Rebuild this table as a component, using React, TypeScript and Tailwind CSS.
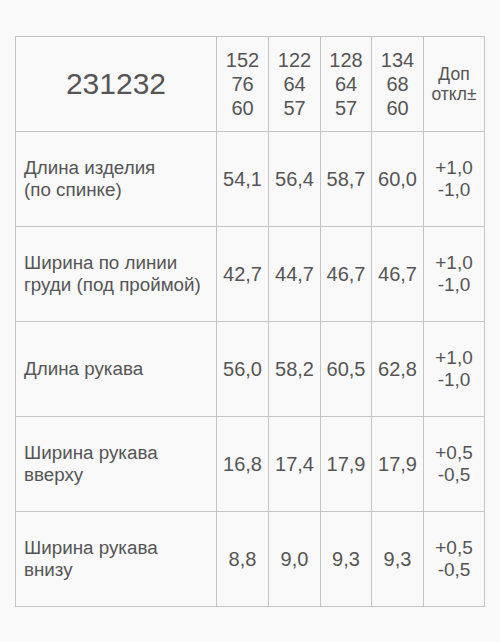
import React from "react";

const rows: { label: string[]; vals: string[]; tol: string[] }[] = [
  { label: ["Длина изделия", "(по спинке)"], vals: ["54,1", "56,4", "58,7", "60,0"], tol: ["+1,0", "-1,0"] },
  { label: ["Ширина по линии", "груди (под проймой)"], vals: ["42,7", "44,7", "46,7", "46,7"], tol: ["+1,0", "-1,0"] },
  { label: ["Длина рукава"], vals: ["56,0", "58,2", "60,5", "62,8"], tol: ["+1,0", "-1,0"] },
  { label: ["Ширина рукава", "вверху"], vals: ["16,8", "17,4", "17,9", "17,9"], tol: ["+0,5", "-0,5"] },
  { label: ["Ширина рукава", "внизу"], vals: ["8,8", "9,0", "9,3", "9,3"], tol: ["+0,5", "-0,5"] },
];

const sizes = [
  ["152", "76", "60"],
  ["122", "64", "57"],
  ["128", "64", "57"],
  ["134", "68", "60"],
];

export default function App() {
  return (
    <div className="w-[500px] h-[642px] bg-[#f9f9f9] pt-[36px] pl-[15px] text-[#555555]" style={{ fontFamily: '"Liberation Sans", Arial, sans-serif' }}>
      <table className="border-collapse border border-[#c4c4c4]">
        <colgroup>
          <col className="w-[201px]" />
          <col className="w-[52px]" />
          <col className="w-[52px]" />
          <col className="w-[51px]" />
          <col className="w-[52px]" />
          <col className="w-[61px]" />
        </colgroup>
        <tbody>
          <tr className="h-[95px]">
            <td className="border border-[#c4c4c4] text-center text-[30px] leading-none p-0">231232</td>
            {sizes.map((s, i) => (
              <td key={i} className="border border-[#c4c4c4] text-center text-[20px] leading-[24px] p-0">
                {s.map((x, j) => (
                  <div key={j}>{x}</div>
                ))}
              </td>
            ))}
            <td className="border border-[#c4c4c4] text-center text-[17.5px] leading-[20px] p-0">
              <div>Доп</div>
              <div>откл±</div>
            </td>
          </tr>
          {rows.map((r, i) => (
            <tr key={i} className="h-[95px]">
              <td className="border border-[#c4c4c4] text-[18.8px] leading-[21.7px] pl-[8px] pr-0 py-0">
                {r.label.map((l, j) => (
                  <div key={j}>{l}</div>
                ))}
              </td>
              {r.vals.map((v, j) => (
                <td key={j} className="border border-[#c4c4c4] text-center text-[20px] p-0">
                  {v}
                </td>
              ))}
              <td className="border border-[#c4c4c4] text-center text-[19px] leading-[22.5px] p-0">
                {r.tol.map((t, j) => (
                  <div key={j}>{t}</div>
                ))}
              </td>
            </tr>
          ))}
        </tbody>
      </table>
    </div>
  );
}
